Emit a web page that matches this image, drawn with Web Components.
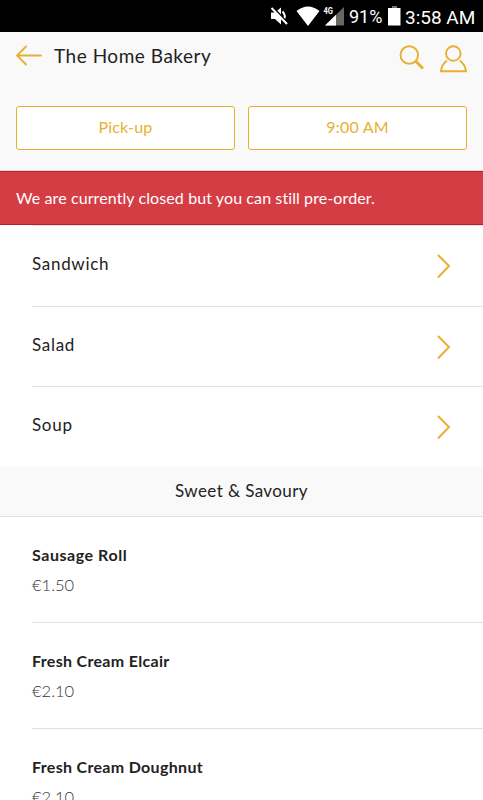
<!DOCTYPE html>
<html lang="en">
<head>
<meta charset="utf-8">
<meta name="viewport" content="width=device-width, initial-scale=1">
<title>The Home Bakery</title>
<style>
body {
    margin: 0;
    height: 800px;
    overflow: hidden;
    background: #fff;
    color: #222;
    font-family: Lato, "Open Sans", sans-serif;
    --accent: #e8b031;
    --line: #e1e1e1;
    --panel: #f9f9f9;
}
</style>
</head>
<body>

<bakery-app></bakery-app>

<script>
const makeTemplate = (html) => {
  const template = document.createElement("template");
  template.innerHTML = html;
  return template;
};

class BaseElement extends HTMLElement {
  constructor() {
    super();
    this.attachShadow({ mode: "open" });
    this.shadowRoot.append(this.constructor.template.content.cloneNode(true));
  }
}

// phone status bar
class StatusBar extends BaseElement {
  static template = makeTemplate(`
<style>
:host {
    display: flex;
    height: 32px;
    background: #000;
    color: #fff;
    font-family: Roboto, sans-serif;
}
svg {
    flex: none;
    width: 145px;
    height: 32px;
    margin-left: 260px;
}
.level {
    font-size: 18px;
    line-height: 34px;
    width: 36px;
    margin-left: -56px;
}
.clock {
    font-size: 19px;
    line-height: 35px;
    margin-left: 20px;
    white-space: nowrap;
}
</style>
<svg viewBox="260 0 145 32">
    <path d="M271 12.500h4l6-5v17l-6-5.500h-4z" fill="#fff"/>
    <path d="M282.500 11.500q4 4.500 1 8" fill="none" stroke="#fff" stroke-width="2"/>
    <path d="M272.500 7l15 16" stroke="#000" stroke-width="2"/>
    <path d="M271.500 8l15.500 16" stroke="#fff" stroke-width="2"/>
    <path d="M296.500 11q11.500-9 23 0l-11.500 15z" fill="#fff"/>
    <path d="M344 7v18.500h-19z" fill="#666"/>
    <path d="M336 14.800v10.700h-11z" fill="#fff"/>
    <text x="323.500" y="13.500" fill="#fff" font-size="8.500" font-weight="700" textLength="9.500" lengthAdjust="spacingAndGlyphs">4G</text>
    <path d="M388 8h12.500v17.500h-12.500z" fill="#fff"/>
    <path d="M392 6h5v2h-5z" fill="#777"/>
</svg>
<span class="level">91%</span>
<span class="clock">3:58 AM</span>
`);
}

// top bar with the shop name and the order options
class ShopHeader extends BaseElement {
  static template = makeTemplate(`
<style>
:host {
    display: block;
    box-sizing: border-box;
    height: 139px;
    background: var(--panel);
    border-bottom: 1px solid #dedede;
}
.top {
    display: flex;
    height: 74px;
    padding: 0 16px;
}
h1 {
    flex: 1;
    margin: 0 0 0 12px;
    font-size: 19px;
    font-weight: 400;
    line-height: 48px;
    letter-spacing: 0.52px;
}
svg {
    fill: none;
    stroke: var(--accent);
    stroke-width: 1.900;
}
.back {
    width: 26px;
    height: 22px;
    margin-top: 12px;
    stroke-linecap: round;
}
.actions {
    width: 68px;
    height: 30px;
    margin-top: 12px;
}
.options {
    display: grid;
    grid-template-columns: 1fr 1fr;
    gap: 13px;
    padding: 0 16px;
}
</style>
<div class="top">
    <svg class="back" viewBox="0 0 26 22"><path d="M1 11.500h24M10 2.500L1 11.500l9 9"/></svg>
    <h1><slot name="title"></slot></h1>
    <svg class="actions" viewBox="399 44 68 30">
        <circle cx="409.300" cy="55" r="8.800"/>
        <path d="M415.500 61l7.500 7.500" stroke-width="2.800"/>
        <circle cx="453.300" cy="53.500" r="7.300"/>
        <path d="M447 60.500q-5.500 4-6 10.800h25q-.8-6.800-6.200-10.800"/>
    </svg>
</div>
<div class="options"><slot></slot></div>
`);
}

class OptionButton extends BaseElement {
  static template = makeTemplate(`
<style>
:host {
    display: block;
}
button {
    display: block;
    box-sizing: border-box;
    width: 100%;
    height: 43.500px;
    padding: 0 0 2px;
    background: #fff;
    border: 1px solid var(--accent);
    border-radius: 3px;
    color: var(--accent);
    font: inherit;
    font-size: 16px;
    letter-spacing: 0.2px;
}
</style>
<button><slot></slot></button>
`);
}

class NoticeBanner extends BaseElement {
  static template = makeTemplate(`
<style>
:host {
    display: block;
    box-sizing: border-box;
    height: 54px;
    padding: 0 16px;
    background: #d53d45;
    border-top: 1px solid #c2202b;
    border-bottom: 1px solid #cc1626;
    color: #fff;
    font-size: 16px;
    line-height: 51px;
    letter-spacing: 0.1px;
}
</style>
<slot></slot>
`);
}

class CategoryRow extends BaseElement {
  static template = makeTemplate(`
<style>
:host {
    display: flex;
    justify-content: space-between;
    box-sizing: border-box;
    height: 80.500px;
    margin-left: 32px;
    padding-right: 32px;
    border-top: 1px solid var(--line);
    font-size: 17px;
    line-height: 75px;
    letter-spacing: 0.7px;
}
svg {
    width: 15px;
    height: 26px;
    margin-top: 27px;
    fill: none;
    stroke: var(--accent);
    stroke-width: 2;
    stroke-linecap: round;
}
</style>
<slot></slot>
<svg viewBox="0 0 15 26"><path d="M2.500 2.500L13 13 2.500 24"/></svg>
`);
}

class SectionTitle extends BaseElement {
  static template = makeTemplate(`
<style>
:host {
    display: block;
    box-sizing: border-box;
    height: 50px;
    background: var(--panel);
    border-bottom: 1px solid var(--line);
    text-align: center;
    font-size: 17px;
    line-height: 48px;
    letter-spacing: 0.4px;
}
</style>
<slot></slot>
`);
}

class MenuItem extends BaseElement {
  static template = makeTemplate(`
<style>
:host {
    display: block;
    box-sizing: border-box;
    height: 106px;
    margin-left: 32px;
    padding-top: 23px;
    border-bottom: 1px solid var(--line);
}
.name {
    font-size: 16px;
    font-weight: 700;
    line-height: 30px;
    letter-spacing: var(--spacing, 0.32px);
}
.price {
    color: #333;
    font-size: 16.500px;
    font-weight: 300;
    line-height: 30px;
}
</style>
<div class="name"><slot></slot></div>
<div class="price"><slot name="price"></slot></div>
`);
}

class BakeryApp extends BaseElement {
  static template = makeTemplate(`
<style>
:host {
    display: block;
}
.wide {
    --spacing: 0.55px;
}
</style>
<status-bar></status-bar>
<shop-header>
    <span slot="title">The Home Bakery</span>
    <option-button>Pick-up</option-button>
    <option-button>9:00 AM</option-button>
</shop-header>
<notice-banner>We are currently closed but you can still pre-order.</notice-banner>
<category-row>Sandwich</category-row>
<category-row>Salad</category-row>
<category-row>Soup</category-row>
<section-title>Sweet &amp; Savoury</section-title>
<menu-item class="wide">Sausage Roll<span slot="price">€1.50</span></menu-item>
<menu-item>Fresh Cream Elcair<span slot="price">€2.10</span></menu-item>
<menu-item>Fresh Cream Doughnut<span slot="price">€2.10</span></menu-item>
`);
}

customElements.define("status-bar", StatusBar);
customElements.define("shop-header", ShopHeader);
customElements.define("option-button", OptionButton);
customElements.define("notice-banner", NoticeBanner);
customElements.define("category-row", CategoryRow);
customElements.define("section-title", SectionTitle);
customElements.define("menu-item", MenuItem);
customElements.define("bakery-app", BakeryApp);
</script>
</body>
</html>
